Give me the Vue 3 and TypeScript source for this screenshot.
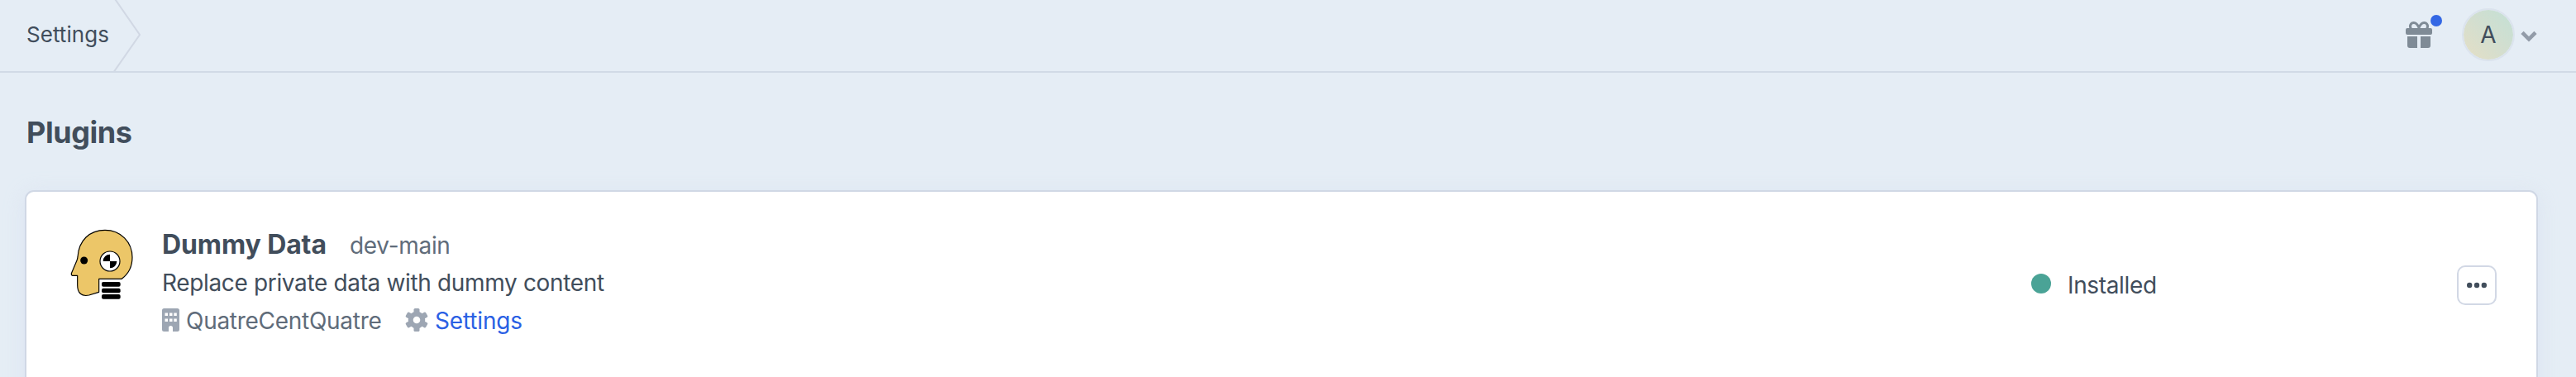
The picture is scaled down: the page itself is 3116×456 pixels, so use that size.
<script setup lang="ts">
import { ref } from 'vue'

interface Plugin {
  name: string
  version: string
  description: string
  developer: string
  status: string
}

const crumbs = ref<string[]>(['Settings'])
const plugins = ref<Plugin[]>([
  {
    name: 'Dummy Data',
    version: 'dev-main',
    description: 'Replace private data with dummy content',
    developer: 'QuatreCentQuatre',
    status: 'Installed',
  },
])
</script>

<template>
  <div class="page">
    <header class="topbar">
      <nav class="crumbs">
        <a v-for="crumb in crumbs" :key="crumb" class="crumb">
          <span class="crumb-label">{{ crumb }}</span>
          <svg class="crumb-sep" viewBox="0 0 40 86" aria-hidden="true">
            <path d="M5.5-2 36 42 4 88" fill="none" stroke="#d1d8e4" stroke-width="2" />
          </svg>
        </a>
      </nav>
      <div class="tools">
        <button class="gift" aria-label="What's new">
          <svg viewBox="0 0 32 32" aria-hidden="true">
            <path d="M6.500 9C4 5 6.500 1.500 9.800 1.500 13 1.500 14.500 4 16 7.500 17.500 4 19 1.500 22.200 1.500 25.500 1.500 28 5 25.500 9" fill="none" stroke="#7f8b96" stroke-width="3" />
            <path fill="#7f8b96" d="M2 8h28a2 2 0 0 1 2 2v4a2 2 0 0 1-2 2H2a2 2 0 0 1-2-2v-4a2 2 0 0 1 2-2ZM2 18h12v14H5a3 3 0 0 1-3-3ZM18 18h12v11a3 3 0 0 1-3 3h-9Z" />
          </svg>
          <span class="badge"></span>
        </button>
        <button class="avatar">A</button>
        <svg class="chevron" viewBox="0 0 20 14" aria-hidden="true">
          <path d="M2 2.300 10 10.300 18 2.300" fill="none" stroke="#929ba8" stroke-width="4.600" />
        </svg>
      </div>
    </header>

    <main class="content">
      <h1>Plugins</h1>
      <section class="card">
        <article v-for="plugin in plugins" :key="plugin.name" class="plugin">
          <svg class="logo" viewBox="0 0 288 318" aria-hidden="true">
            <path
              d="M54 134C58 74 97 37 153 37C210 37 252 80 252 136C252 170 238 196 214 214H131V262L95 273C68 279 53 265 53 236V202H35Q30 201 31 194L51 147Q53 142 54 134Z"
              fill="#ecc668" stroke="#000" stroke-width="3.500" stroke-linejoin="round"
            />
            <circle cx="77" cy="147" r="13.500" />
            <circle cx="171" cy="150" r="36" fill="#fff" stroke="#000" stroke-width="3.500" />
            <path d="M171 150V125A25 25 0 0 0 146 150ZM171 150V175A25 25 0 0 0 196 150Z" />
            <rect x="141" y="225" width="68" height="17.500" rx="6" />
            <rect x="141" y="248" width="68" height="17" rx="6" />
            <rect x="141" y="270" width="68" height="17.500" rx="6" />
          </svg>
          <div class="details">
            <div class="line">
              <h2>{{ plugin.name }}</h2>
              <span class="version">{{ plugin.version }}</span>
            </div>
            <p class="line description">{{ plugin.description }}</p>
            <div class="line meta">
              <svg class="building" viewBox="0 0 21 28" aria-hidden="true">
                <path
                  fill="#9da6b3" fill-rule="evenodd"
                  d="M2.500 0h16A2.500 2.500 0 0 1 21 2.500v23a2.500 2.500 0 0 1-2.500 2.500H13v-4.500a2.500 2.500 0 0 0-5 0V28H2.500A2.500 2.500 0 0 1 0 25.500v-23A2.500 2.500 0 0 1 2.500 0ZM3.500 5.500v3.500h3.500v-3.500ZM9 5.500v3.500h3.500v-3.500ZM14.300 5.500v3.500h3.500v-3.500ZM3.500 12.500v3.500h3.500v-3.500ZM9 12.500v3.500h3.500v-3.500ZM14.300 12.500v3.500h3.500v-3.500Z"
                />
              </svg>
              <span class="developer">{{ plugin.developer }}</span>
              <svg class="gear" viewBox="0 0 28 28" aria-hidden="true">
                <circle cx="14" cy="14" r="7.300" fill="none" stroke="#9da6b3" stroke-width="6" />
                <g fill="#9da6b3">
                  <rect v-for="n in 6" :key="n" x="10.500" y="0" width="7" height="7" rx="1.500" :transform="`rotate(${n * 60} 14 14)`" />
                </g>
              </svg>
              <a class="settings">Settings</a>
            </div>
          </div>
          <div class="status">
            <span class="dot"></span>
            <span class="status-label">{{ plugin.status }}</span>
          </div>
          <button class="more" aria-label="Actions">
            <svg viewBox="0 0 24 8" aria-hidden="true">
              <circle cx="3.200" cy="4" r="3.200" />
              <circle cx="12" cy="4" r="3.200" />
              <circle cx="20.800" cy="4" r="3.200" />
            </svg>
          </button>
        </article>
      </section>
    </main>
  </div>
</template>

<style>
body {
  background: #e5edf5;
}
</style>

<style scoped>
.page {
  height: 456px;
  overflow: hidden;
  background: #e5edf5;
  color: #414d5b;
  font-family: Inter, "Liberation Sans", sans-serif;
  font-size: 28px;
}
svg {
  display: block;
  flex: none;
  overflow: visible;
}
button {
  padding: 0;
  border: 0;
  background: none;
  font: inherit;
  color: inherit;
}
h1,
h2,
p {
  margin: 0;
}
.topbar {
  box-sizing: border-box;
  display: flex;
  justify-content: space-between;
  height: 88px;
  padding: 0 47px 0 32px;
  border-bottom: 2px solid #d1dae6;
}
.crumb {
  display: flex;
  height: 86px;
  overflow: hidden;
}
.crumb-label {
  width: 101px;
  font-size: 26px;
  line-height: 83px;
  white-space: nowrap;
  letter-spacing: 0.05px;
}
.crumb-sep {
  width: 40px;
  height: 86px;
}
.tools {
  display: flex;
  align-items: center;
  height: 84px;
}
.gift {
  position: relative;
  width: 32px;
  height: 32px;
  margin-right: 36px;
}
.gift svg {
  width: 32px;
  height: 32px;
}
.badge {
  position: absolute;
  top: -8px;
  right: -12px;
  width: 14px;
  height: 14px;
  border-radius: 50%;
  background: #3367e4;
}
.avatar {
  box-sizing: border-box;
  width: 64px;
  height: 64px;
  margin-right: 7px;
  border: 2px solid #dbe3ed;
  border-radius: 50%;
  background: linear-gradient(45deg, #e5dfc5, #d3decf 50%, #c3e0d5);
  background-clip: padding-box;
  font-size: 28px;
  line-height: 60px;
}
.chevron {
  width: 20px;
  height: 14px;
  margin-top: 3px;
}
.content {
  padding: 50px 46px 0 30px;
}
h1 {
  margin: 0 0 48px 2px;
  font-size: 36px;
  line-height: 44px;
  letter-spacing: -0.45px;
}
.card {
  min-height: 300px;
  padding: 34px 48px 0 44px;
  border: 2px solid #d0d8e5;
  border-radius: 11px;
  background: #fff;
  box-shadow: 0 4px 24px rgba(205, 216, 238, 0.4);
}
.plugin {
  display: flex;
  align-items: center;
  height: 158px;
}
.logo {
  align-self: flex-start;
  width: 96px;
  height: 106px;
}
.details {
  flex: 1;
  align-self: flex-start;
  padding: 7px 0 0 24px;
}
.line {
  display: flex;
  align-items: baseline;
  height: 46px;
  line-height: 46px;
  white-space: nowrap;
}
h2 {
  width: 227px;
  font-size: 32px;
  line-height: 46px;
  letter-spacing: -0.1px;
}
.version,
.developer {
  color: #606c7a;
}
.version {
  letter-spacing: -0.3px;
}
.description {
  letter-spacing: -0.35px;
}
.meta {
  align-items: center;
}
.building {
  width: 21px;
  height: 28px;
  margin: 0 8px 0 0;
  position: relative;
  top: -1px;
}
.developer {
  width: 265px;
  letter-spacing: -0.28px;
}
.gear {
  position: relative;
  top: -1px;
  width: 28px;
  height: 28px;
  margin-right: 8px;
}
.settings {
  color: #2a60e4;
  letter-spacing: -0.15px;
}
.status {
  display: flex;
  align-items: center;
  width: 515px;
}
.status-label {
  letter-spacing: -0.35px;
}
.dot {
  width: 24px;
  height: 24px;
  margin: -4px 20px 0 0;
  border-radius: 50%;
  background: #4aa396;
}
.more {
  box-sizing: border-box;
  display: grid;
  place-items: center;
  width: 48px;
  height: 48px;
  border: 2px solid #d2d8e5;
  border-radius: 10px;
}
.more svg {
  width: 24px;
  height: 8px;
  fill: #414d5b;
}
</style>
